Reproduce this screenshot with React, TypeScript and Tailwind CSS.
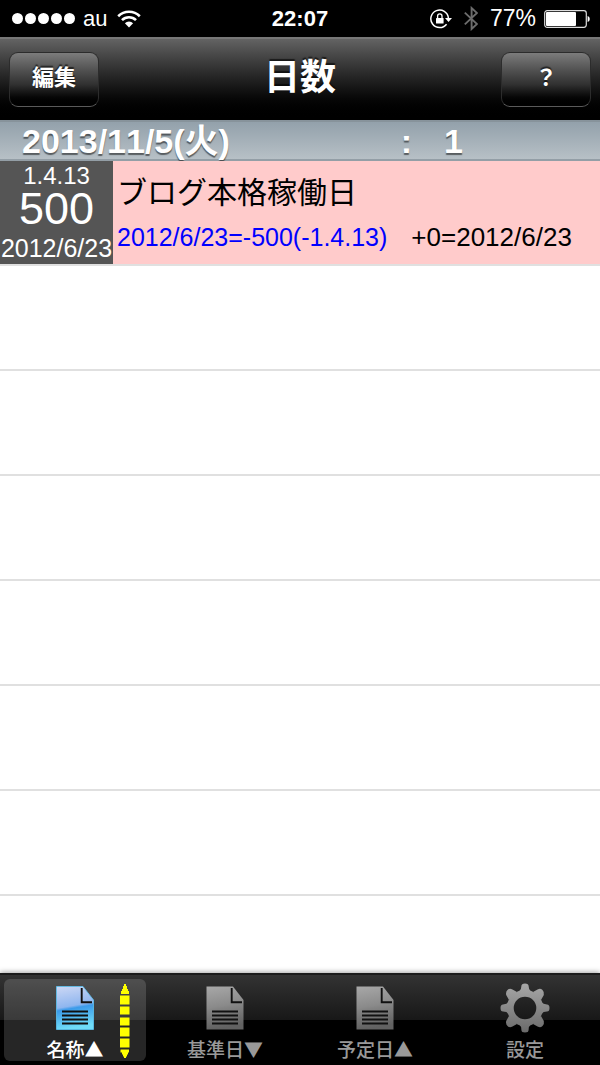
const tabs = [
  { label: "名称▲", icon: "doc", active: true },
  { label: "基準日▼", icon: "doc", active: false },
  { label: "予定日▲", icon: "doc", active: false },
  { label: "設定", icon: "gear", active: false },
];

const navButton =
  "w-[90px] h-[55px] rounded-[9px] border border-[#2c2c2c] border-b-[#5a5a5a] bg-linear-to-b from-[#7c7c7c] via-[#303030] via-60% to-black pb-1 text-[22px] leading-none font-bold text-white [text-shadow:0_-2px_1px_rgba(0,0,0,0.6)]";

const WifiIcon = () => (
  <svg viewBox="0 0 24 18" className="w-6 h-[18px]" fill="none" stroke="#fff" strokeWidth="2.6">
    <path d="M1.2 6.2a15.4 15.4 0 0 1 21.6 0" />
    <path d="M5 10.2a9.9 9.9 0 0 1 14 0" />
    <path d="M12 17.4 7.9 13.3a5.8 5.8 0 0 1 8.2 0z" fill="#fff" stroke="none" />
  </svg>
);

const LockIcon = () => (
  <svg viewBox="0 0 22 20" className="w-[22px] h-5" fill="none">
    <path d="M16.6 15.2A8.8 8.8 0 1 1 18.4 9" stroke="#fff" strokeWidth="1.5" />
    <path d="M15 9h7l-3.5 4z" fill="#fff" />
    <rect x="6" y="9" width="7.6" height="5.6" rx="0.6" fill="#fff" />
    <path d="M7.6 9.2V7a2.2 2.2 0 0 1 4.4 0v2.2" stroke="#fff" strokeWidth="1.3" />
  </svg>
);

const BluetoothIcon = () => (
  <svg viewBox="0 0 14 25" className="w-[14px] h-[25px]" fill="none" stroke="#6c6c6c" strokeWidth="1.9">
    <path d="M.8 6.6 13 18 7.6 23V2L13 7 .8 18.4" />
  </svg>
);

const BatteryIcon = () => (
  <svg viewBox="0 0 46 18" className="w-[46px] h-[18px]">
    <rect x="0.7" y="0.7" width="41.6" height="16.6" rx="2.5" fill="none" stroke="#ddd" strokeWidth="1.2" />
    <rect x="2" y="2" width="30" height="14" rx="1" fill="#fff" />
    <path d="M43.6 6q2.2.6 2.2 3t-2.2 3z" fill="#fff" />
  </svg>
);

const DocIcon = ({ active }: { active: boolean }) => {
  const id = active ? "doc-on" : "doc-off";
  return (
    <svg viewBox="0 0 38 44" className="w-[38px] h-11">
      <defs>
        <linearGradient id={id} x1="0" y1="0" x2="0.15" y2="1">
          <stop offset="0" stopColor={active ? "#cdd8f5" : "#a8a8a8"} />
          <stop offset="0.5" stopColor={active ? "#8fb6ef" : "#8a8a8a"} />
          <stop offset="0.56" stopColor={active ? "#3c9bea" : "#838383"} />
          <stop offset="1" stopColor={active ? "#6fdcf8" : "#626262"} />
        </linearGradient>
      </defs>
      <path
        d="M0.5 0.5H27L37.5 14V43.5H0.5z"
        fill={`url(#${id})`}
        stroke={active ? "#5cc4f2" : "none"}
        strokeWidth="0.8"
      />
      <path d="M25.7 2v14.3H36" fill="none" stroke="#111" strokeWidth="1.9" />
      <path d="M6 25.5h26M6 29.5h26M6 33.5h26M6 37.5h26" stroke="#111" strokeWidth="1.9" />
    </svg>
  );
};

const GearIcon = () => (
  <svg viewBox="-25 -25 50 50" className="w-[50px] h-[50px]">
    <defs>
      <linearGradient id="gear" gradientUnits="userSpaceOnUse" x1="0" y1="-25" x2="0" y2="25">
        <stop offset="0" stopColor="#a8a8a8" />
        <stop offset="1" stopColor="#6a6a6a" />
      </linearGradient>
    </defs>
    <circle r="14.7" fill="none" stroke="url(#gear)" strokeWidth="6.8" />
    <g fill="url(#gear)">
      <path d="M-6-16.5Q-3.6-18-3.6-22-3.6-24.5 0-24.5T3.6-22Q3.6-18 6-16.5z" />
      <path d="M-6 16.5Q-3.6 18-3.6 22-3.6 24.5 0 24.5T3.6 22Q3.6 18 6 16.5z" />
      <path d="M-16.5-6Q-18-3.6-22-3.6-24.5-3.6-24.5 0T-22 3.6Q-18 3.6-16.5 6z" />
      <path d="M16.5-6Q18-3.6 22-3.6 24.5-3.6 24.5 0T22 3.6Q18 3.6 16.5 6z" />
      <path d="M-16-8-18.8-13Q-19.5-16-17.5-18T-13-18.8L-8-16z" />
      <path d="M16-8 18.8-13Q19.5-16 17.5-18T13-18.8L8-16z" />
      <path d="M-16 8-18.8 13Q-19.5 16-17.5 18T-13 18.8L-8 16z" />
      <path d="M16 8 18.8 13Q19.5 16 17.5 18T13 18.8L8 16z" />
    </g>
  </svg>
);

const RangeMarker = () => (
  <svg viewBox="0 0 10 74" className="absolute right-4 top-[5px] w-[10px] h-[74px]" fill="#ffff00">
    <path d="M4 0h2v2h1v3h1v2h1v3H1V7h1V5h1V2h1z" />
    <path d="M0 11.5h9.500v9H0zM0 22.5h9.500v8H0zM0 33.5h9.500v8H0zM0 43.5h9.500v9H0zM0 54.5h9.500v9H0z" />
    <path d="M0.5 65.5h8.500v3H8v2H7v2H6v1.500H4V72.5H3v-2H2v-2H0.5z" />
  </svg>
);

const App = () => (
  <div className="flex min-h-screen flex-col bg-white font-['Liberation_Sans','Noto_Sans_CJK_JP',sans-serif]">
    <div className="grid h-[37px] grid-cols-[1fr_auto_1fr] items-center bg-black px-[10px] text-[22px] leading-none text-white">
      <div className="flex items-center pl-[2px]">
        <div className="flex gap-[2px]">
          {[1, 2, 3, 4, 5].map((n) => (
            <span key={n} className="size-[11px] rounded-full bg-white" />
          ))}
        </div>
        <span className="ml-2 mr-[10px]">au</span>
        <WifiIcon />
      </div>
      <span className="font-bold">22:07</span>
      <div className="flex items-center justify-end">
        <LockIcon />
        <span className="mx-3">
          <BluetoothIcon />
        </span>
        <span className="mr-2 text-[23px]">77%</span>
        <BatteryIcon />
      </div>
    </div>

    <header className="flex h-[83px] items-center justify-between border-t-2 border-[#777] bg-linear-to-b from-[#636363] to-black px-[9px]">
      <button className={navButton}>編集</button>
      <h1 className="pb-1 text-4xl leading-none font-bold text-white [text-shadow:0_-2px_1px_rgba(0,0,0,0.6)]">日数</h1>
      <button className={navButton}>？</button>
    </header>

    <main className="flex flex-1 flex-col">
      <h2 className="grid h-[41px] grid-cols-[1.9fr_1fr] items-center border-y-2 border-t-[#87939b] border-b-[#939ea6] bg-linear-to-b from-[#93a1ab] to-[#b7c0c6] pl-[22px] text-[34px] leading-none font-bold text-white [font-kerning:none] [text-shadow:0_2px_1px_rgba(0,0,0,0.5)]">
        <span>2013/11/5(火)</span>
        <span className="flex gap-8">
          <span>:</span>
          <span>1</span>
        </span>
      </h2>
      <ul className="flex flex-1 flex-col">
        <li className="flex h-[105px] border-b-2 border-[#e0e0e0] bg-[#ffcbcb]">
          <div className="flex w-[113px] shrink-0 flex-col items-center bg-[#555] pt-[3px] text-[25px] leading-6 whitespace-nowrap text-white [font-kerning:none]">
            <span className="text-2xl leading-6">1.4.13</span>
            <span className="text-[45px] leading-[42px]">500</span>
            <span className="pt-[6px]">2012/6/23</span>
          </div>
          <div className="flex flex-col gap-3 pt-4 pl-1 whitespace-nowrap [font-kerning:none]">
            <span className="text-[30px] leading-8">ブログ本格稼働日</span>
            <div className="flex gap-6 leading-8">
              <span className="text-[25px] text-[#0000ff]">2012/6/23=-500(-1.4.13)</span>
              <span className="text-[26px] text-black">+0=2012/6/23</span>
            </div>
          </div>
        </li>
        {[1, 2, 3, 4, 5, 6].map((n) => (
          <li key={n} className="h-[105px] border-b-2 border-[#e0e0e0]" />
        ))}
        <li className="flex-1" />
      </ul>
    </main>

    <nav className="grid h-[92px] grid-cols-4 border-t-2 border-[#1c1c1c] bg-linear-to-b from-[#333] via-[#181818] via-50% to-black to-50% font-['Noto_Sans_CJK_JP',sans-serif] shadow-[0_-1px_5px_rgba(0,0,0,0.35)]">
      {tabs.map((tab) => (
        <button
          key={tab.label}
          className={`relative m-1 flex flex-col items-center rounded-md text-[19px] leading-6 font-medium ${
            tab.active ? "bg-white/15 text-white" : "text-[#999]"
          }`}
        >
          <span className="flex h-[58px] items-center">
            {tab.icon === "gear" ? <GearIcon /> : <DocIcon active={tab.active} />}
          </span>
          {tab.label}
          {tab.active && <RangeMarker />}
        </button>
      ))}
    </nav>
  </div>
);

export default App;
